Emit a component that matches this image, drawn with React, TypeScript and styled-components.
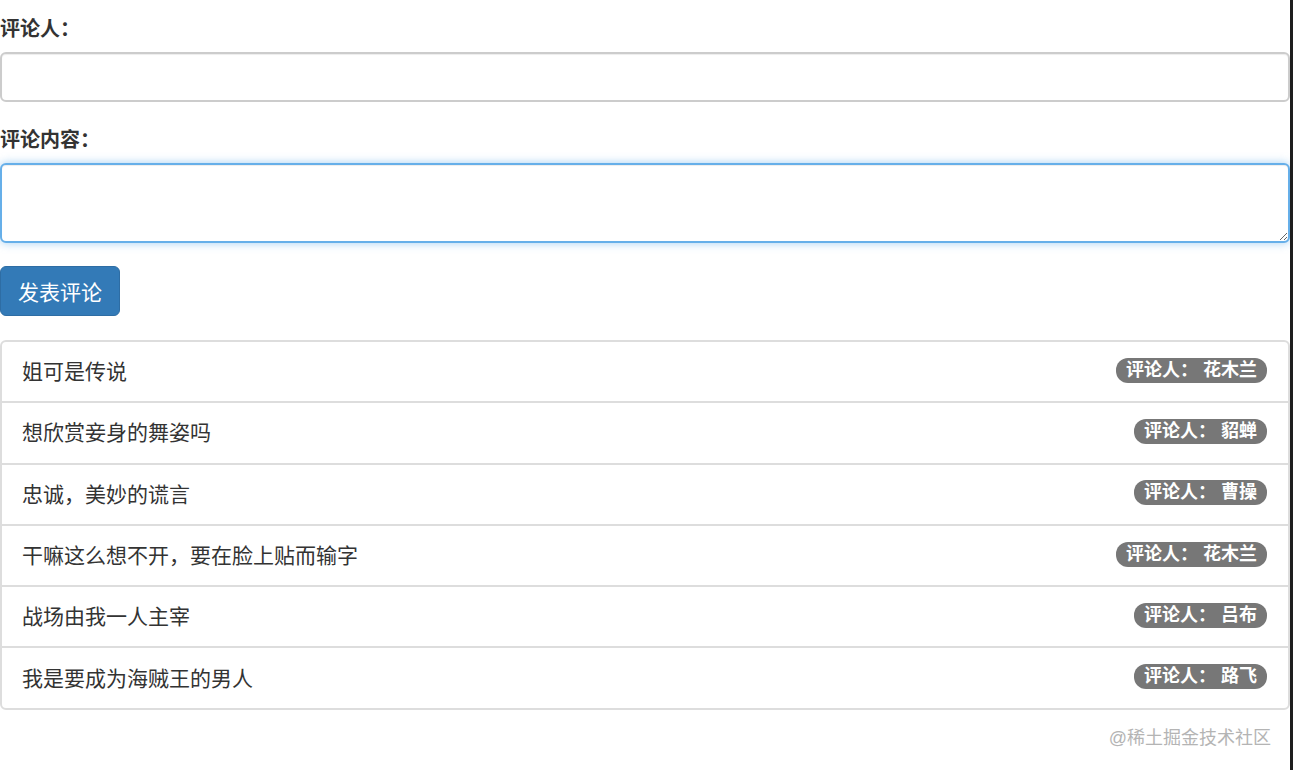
import React from 'react';
import styled, { createGlobalStyle } from 'styled-components';

const GlobalStyle = createGlobalStyle`
  html, body {
    margin: 0;
    padding: 0;
    background: #fff;
  }
  body {
    font-family: "Liberation Sans", "Noto Sans CJK SC", sans-serif;
    color: #333;
    font-size: 20px;
    line-height: 29px;
  }
  * {
    box-sizing: border-box;
  }
`;

const Page = styled.div`
  display: flex;
  min-height: 770px;
`;

const Content = styled.div`
  width: 1290px;
  padding-top: 15px;
`;

const Edge = styled.div`
  width: 3px;
  background: #1e1e1e;
`;

const FormGroup = styled.div<{ $gap: number }>`
  margin-bottom: ${(p) => p.$gap}px;
`;

const Label = styled.label`
  display: block;
  font-weight: bold;
  font-size: 20px;
  line-height: 29px;
  margin-bottom: 8px;
`;

const fieldBase = `
  display: block;
  width: 100%;
  padding: 9px 17px;
  font-family: "Liberation Sans", "Noto Sans CJK SC", sans-serif;
  font-size: 20px;
  line-height: 29px;
  color: #555;
  background: #fff;
  border-radius: 6px;
  outline: none;
`;

const Input = styled.input`
  ${fieldBase}
  height: 50px;
  border: 2px solid #ccc;
  box-shadow: inset 0 1px 1px rgba(0, 0, 0, 0.075);
`;

const TextArea = styled.textarea<{ $focused?: boolean }>`
  ${fieldBase}
  height: 80px;
  resize: vertical;
  border: 2px solid ${(p) => (p.$focused ? '#66afe9' : '#ccc')};
  box-shadow: inset 0 1px 1px rgba(0, 0, 0, 0.075)
    ${(p) => (p.$focused ? ', 0 0 10px rgba(102, 175, 233, 0.6)' : '')};
`;

const Button = styled.button`
  display: inline-block;
  height: 50px;
  padding: 0 17px;
  font-family: "Liberation Sans", "Noto Sans CJK SC", sans-serif;
  font-size: 21px;
  color: #fff;
  background: #337ab7;
  border: 1px solid #2e6da4;
  border-radius: 6px;
  cursor: pointer;
`;

const List = styled.ul`
  list-style: none;
  margin: 24px 0 0;
  padding: 0;
  border: 2px solid #ddd;
  border-radius: 6px;
`;

const Item = styled.li`
  display: flex;
  align-items: center;
  justify-content: space-between;
  padding: 15px 21px 15px 20px;
  font-size: 21px;
  line-height: 29px;
  color: #333;
  border-bottom: 2px solid #ddd;
  height: 61.3px;

  &:last-child {
    border-bottom: none;
    height: 59.3px;
  }
`;

const Badge = styled.span`
  display: inline-block;
  padding: 3px 10px;
  margin-top: -3px;
  font-size: 18px;
  line-height: 19px;
  font-weight: bold;
  color: #fff;
  background: #777;
  border-radius: 12px;
  white-space: pre;
`;

const Watermark = styled.div`
  text-align: right;
  padding-right: 19px;
  margin-top: 16px;
  font-size: 18px;
  line-height: 24px;
  color: #b4b4b4;
`;

const comments = [
  { content: '姐可是传说', user: '花木兰' },
  { content: '想欣赏妾身的舞姿吗', user: '貂蝉' },
  { content: '忠诚，美妙的谎言', user: '曹操' },
  { content: '干嘛这么想不开，要在脸上贴而输字', user: '花木兰' },
  { content: '战场由我一人主宰', user: '吕布' },
  { content: '我是要成为海贼王的男人', user: '路飞' },
];

export default function App() {
  return (
    <>
      <GlobalStyle />
      <Page>
        <Content>
          <FormGroup $gap={24}>
            <Label>评论人：</Label>
            <Input type="text" />
          </FormGroup>
          <FormGroup $gap={23}>
            <Label>评论内容：</Label>
            <TextArea $focused />
          </FormGroup>
          <Button>发表评论</Button>
          <List>
            {comments.map((c, i) => (
              <Item key={i}>
                <span>{c.content}</span>
                <Badge>{`评论人： ${c.user}`}</Badge>
              </Item>
            ))}
          </List>
          <Watermark>@稀土掘金技术社区</Watermark>
        </Content>
        <Edge />
      </Page>
    </>
  );
}
